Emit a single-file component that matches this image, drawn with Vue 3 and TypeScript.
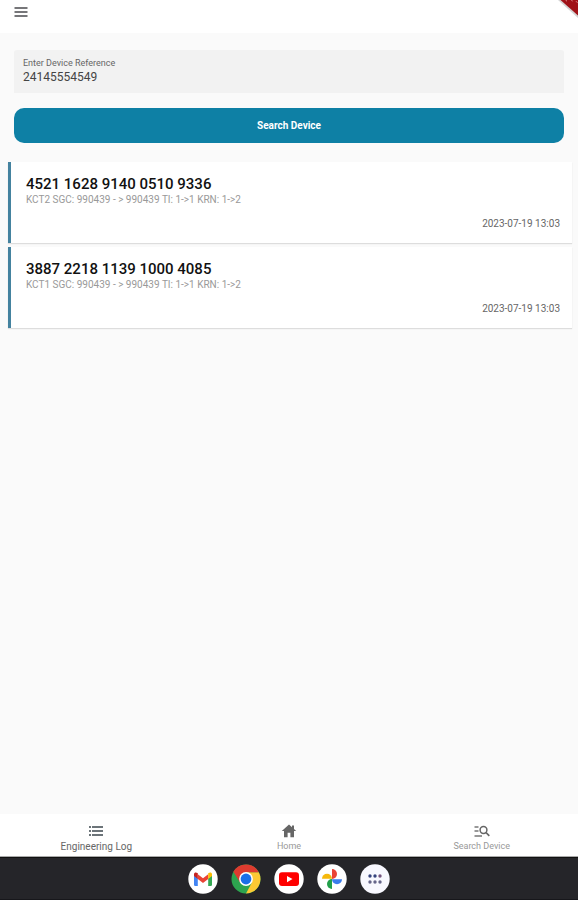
<script setup lang="ts">
import { ref } from 'vue'

interface LogEntry {
  token: string
  detail: string
  time: string
}

const reference = ref('24145554549')

const entries: LogEntry[] = [
  { token: '4521 1628 9140 0510 9336', detail: 'KCT2 SGC: 990439 - > 990439 TI: 1->1 KRN: 1->2', time: '2023-07-19 13:03' },
  { token: '3887 2218 1139 1000 4085', detail: 'KCT1 SGC: 990439 - > 990439 TI: 1->1 KRN: 1->2', time: '2023-07-19 13:03' },
]
</script>

<template>
  <div class="screen">
    <header class="bar">
      <button class="menu" type="button" aria-label="Menu">
        <svg viewBox="0 0 14 10" width="14" height="10"><path d="M0.500 1h13M0.500 5h13M0.500 9h13" stroke="#4a4a4e" stroke-width="1.400" /></svg>
      </button>
      <svg class="ribbon" viewBox="0 0 20 18" width="20" height="18" aria-hidden="true">
        <path d="M0 0H20V18Z" fill="#555" opacity=".25" />
        <path d="M2.500 0H20V15.500Z" fill="#a01218" />
        <path d="M7.500 0l1.500 1.200M13.500 0l1 1.300M18 1.200l1.500 1.600" stroke="#dc8c8e" stroke-width="1" />
      </svg>
    </header>

    <main class="content">
      <form class="search" @submit.prevent>
        <div class="field">
          <label for="device">Enter Device Reference</label>
          <input id="device" v-model="reference" type="text" />
        </div>
        <button class="submit" type="submit">Search Device</button>
      </form>

      <section class="list">
        <article v-for="entry in entries" :key="entry.token" class="card">
          <h2>{{ entry.token }}</h2>
          <p>{{ entry.detail }}</p>
          <time>{{ entry.time }}</time>
        </article>
      </section>
    </main>

    <nav class="tabs">
      <a href="#log" class="tab active">
        <svg viewBox="0 0 16 16" width="16" height="16">
          <path d="M1 4h2M1 8h2M1 12h2M4 4h11M4 8h11M4 12h11" stroke="#3c474e" stroke-width="1.700" />
        </svg>
        <span>Engineering Log</span>
      </a>
      <a href="#home" class="tab">
        <svg viewBox="0 0 16 16" width="16" height="16">
          <path d="M8 1.500L0.800 8H3v6.300h3.600V9.800h2.800v4.500H13V8h2.200L13 6V2.500h-2v1.700z" fill="#666" />
        </svg>
        <span>Home</span>
      </a>
      <a href="#search" class="tab">
        <svg viewBox="0 0 16 16" width="16" height="16">
          <path d="M0.500 4h4M0.500 8h4M0.500 13h7.500" stroke="#777" stroke-width="1.400" />
          <circle cx="9.500" cy="7" r="3.400" fill="none" stroke="#666" stroke-width="1.500" />
          <path d="M12 9.500l3.300 3.300" stroke="#666" stroke-width="1.700" />
        </svg>
        <span>Search Device</span>
      </a>
    </nav>

    <footer class="dock">
      <button type="button" aria-label="Gmail">
        <svg viewBox="0 0 30 30" width="30" height="30">
          <circle cx="15" cy="15" r="14.700" fill="#fff" />
          <path d="M6 11.500l3.800 2.800V22H7.200Q6 22 6 20.800z" fill="#4285f4" />
          <path d="M24 11.500l-3.800 2.800V22h2.600q1.200 0 1.200-1.200z" fill="#34a853" />
          <path d="M9.800 10.200L15 14.200l5.200-4v4.700L15 18.900l-5.200-4z" fill="#ea4335" />
          <path d="M6 12V10.300C6 8.300 8 7.900 9.400 9l.4.300v5.600z" fill="#c5221f" />
          <path d="M24 12V10.300c0-2-2-2.400-3.400-1.300l-.4.300v5.600z" fill="#fbbc04" />
        </svg>
      </button>
      <button type="button" aria-label="Chrome">
        <svg viewBox="0 0 30 30" width="30" height="30">
          <circle cx="15" cy="15" r="14.500" fill="#2da44f" />
          <path d="M15 8.200H27.800A14.500 14.500 0 0 1 15 29.500L20.900 18.400Z" fill="#fcc934" />
          <path d="M2.400 7.800A14.500 14.500 0 0 1 27.800 8.200H15L9.100 18.400Z" fill="#de3b2f" />
          <circle cx="15" cy="15" r="6.900" fill="#fff" />
          <circle cx="15" cy="15" r="5.400" fill="#1a6fe8" />
        </svg>
      </button>
      <button type="button" aria-label="YouTube">
        <svg viewBox="0 0 30 30" width="30" height="30">
          <circle cx="15" cy="15" r="14.700" fill="#fff" />
          <rect x="5" y="8.200" width="20" height="13.800" rx="3" fill="#f00" />
          <path d="M13 12l5.500 3.100L13 18.200z" fill="#fff" />
        </svg>
      </button>
      <button type="button" aria-label="Photos">
        <svg viewBox="0 0 30 30" width="30" height="30">
          <circle cx="15" cy="15" r="14.700" fill="#fff" />
          <path d="M15 5a5 5 0 0 1 0 10z" fill="#ea4335" />
          <path d="M25 15.200a5 5 0 0 1-10 0z" fill="#3b7ded" />
          <path d="M15 25a5 5 0 0 1 0-10z" fill="#22a04a" />
          <path d="M5 14.800a5 5 0 0 1 10 0z" fill="#f6b90c" />
        </svg>
      </button>
      <button type="button" aria-label="All apps">
        <svg viewBox="0 0 30 30" width="30" height="30">
          <circle cx="15" cy="15" r="14.700" fill="#f8f8ff" />
          <g fill="#35437e">
            <circle cx="10" cy="12" r="1.700" /><circle cx="15" cy="12" r="1.700" /><circle cx="20" cy="12" r="1.700" fill="#74547f" />
          </g>
          <g fill="#65658a">
            <circle cx="10" cy="18" r="1.700" /><circle cx="15" cy="18" r="1.700" /><circle cx="20" cy="18" r="1.700" />
          </g>
        </svg>
      </button>
    </footer>
  </div>
</template>

<style>
body {
  background: #fafafa;
}
</style>

<style scoped>
.screen {
  box-sizing: border-box;
  display: flex;
  flex-direction: column;
  min-height: 100vh;
  background: #fafafa;
  font-family: Roboto, "Liberation Sans", sans-serif;
  color: #222;
}
button {
  border: 0;
  padding: 0;
  background: none;
  font-family: inherit;
  cursor: pointer;
}
svg {
  display: block;
}
.bar {
  display: flex;
  justify-content: space-between;
  align-items: flex-start;
  height: 33px;
  background: #fff;
}
.menu {
  padding: 7px 14px;
}
.content {
  flex: 1;
  padding: 17px 6px 0 8px;
}
.search {
  display: flex;
  flex-direction: column;
  gap: 15px;
  padding: 0 8px 0 6px;
}
.field {
  display: flex;
  flex-direction: column;
  padding: 7px 9px 8px;
  background: #f2f2f2;
  border-radius: 3px 3px 0 0;
}
.field label {
  font-size: 9px;
  line-height: 12px;
  color: #666;
}
.field input {
  height: 16px;
  border: 0;
  padding: 0;
  outline: 0;
  background: none;
  font-family: inherit;
  font-size: 12px;
  color: #444;
}
.submit {
  height: 35px;
  border-radius: 10px;
  background: #0e80a5;
  color: #fff;
  font-size: 10px;
  font-weight: 700;
}
.list {
  display: flex;
  flex-direction: column;
  gap: 4px;
  margin-top: 19px;
}
.card {
  display: flex;
  flex-direction: column;
  padding: 13px 12px 13px 15px;
  border-left: 3px solid #44829f;
  background: #fff;
  box-shadow: 0 1px 1px #ddd;
}
.card h2 {
  margin: 0;
  font-size: 15px;
  line-height: 18px;
  font-weight: 500;
  color: #111;
}
.card p {
  margin: 0;
  font-size: 10px;
  line-height: 13px;
  color: #999;
}
.card time {
  align-self: flex-end;
  margin-top: 11px;
  font-size: 10px;
  line-height: 13px;
  color: #666;
}
.tabs {
  display: grid;
  grid-template-columns: repeat(3, 1fr);
  background: #fff;
  border-bottom: 1px solid #aaa;
}
.tab {
  display: flex;
  flex-direction: column;
  align-items: center;
  gap: 1px;
  padding: 9px 0 3px;
  font-size: 9px;
  line-height: 13px;
  color: #999;
  text-decoration: none;
}
.tab.active {
  font-size: 10px;
  color: #666;
}
.dock {
  display: flex;
  justify-content: center;
  gap: 13px;
  padding: 6px 0 5px;
  border-top: 1px solid #111;
  border-bottom: 1px solid #17171b;
  background: #252529;
}
</style>
